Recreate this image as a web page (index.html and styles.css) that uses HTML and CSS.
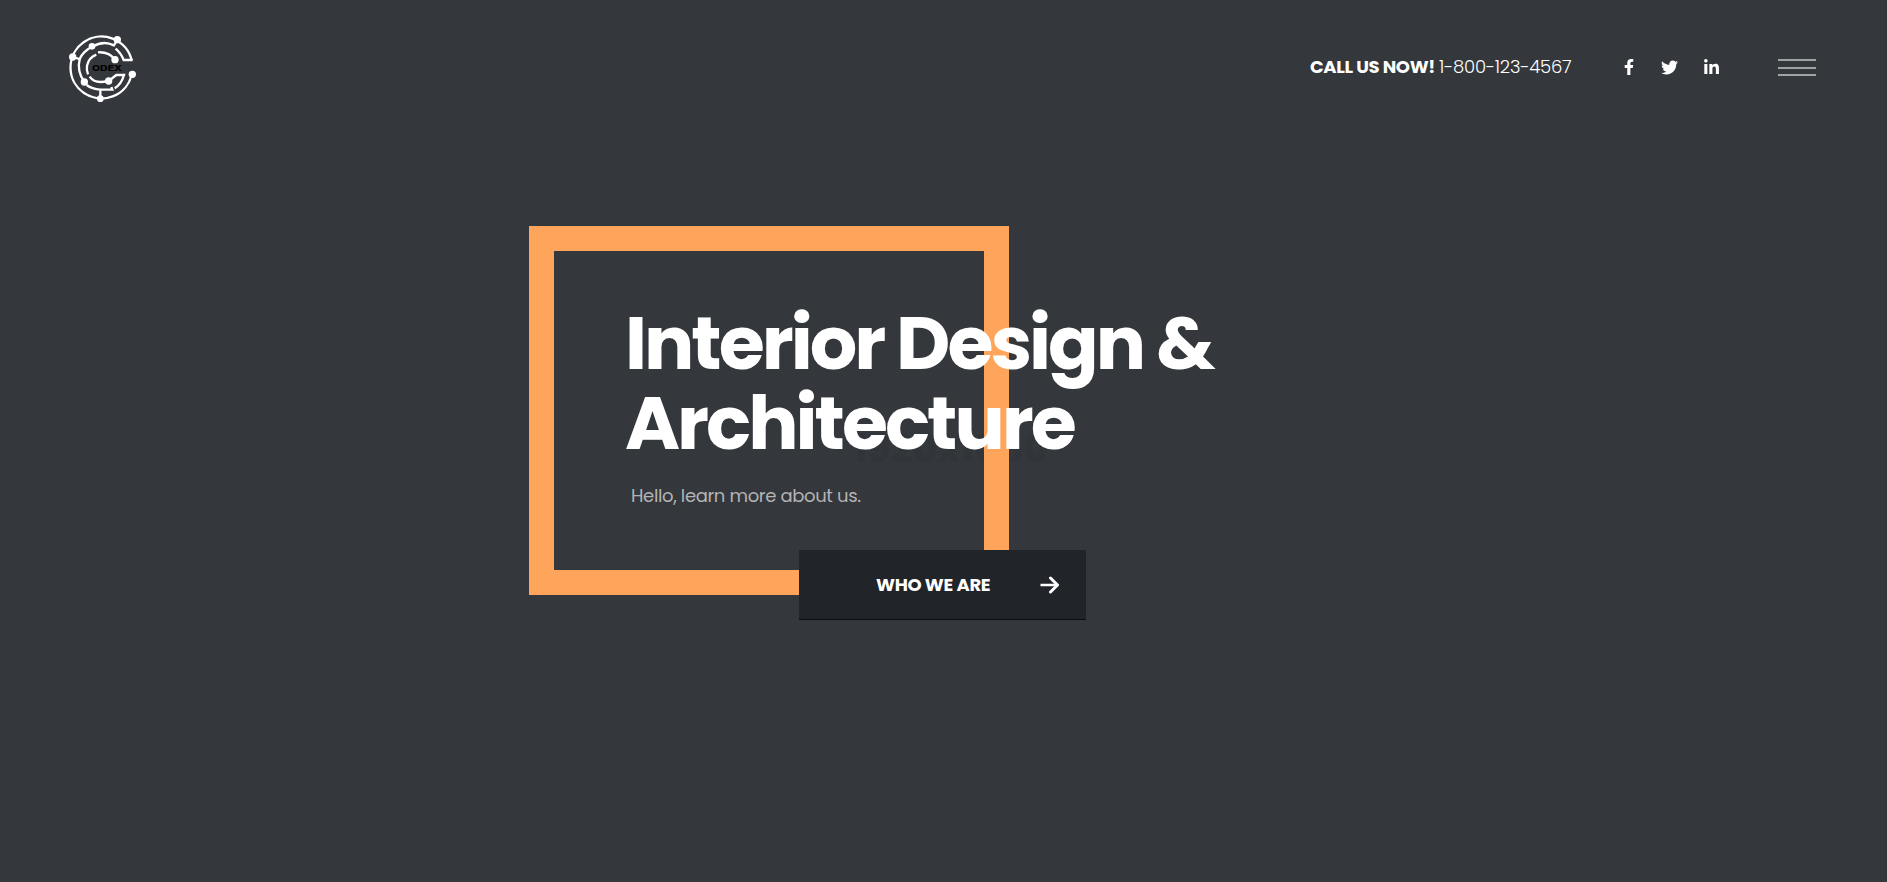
FILE: index.html
```html
<!DOCTYPE html>
<html lang="en">
<head>
<meta charset="utf-8">
<title>Interior Design &amp; Architecture</title>
<link rel="stylesheet" href="styles.css">
</head>
<body>
<header class="header">
  <a class="logo">
    <svg viewBox="0 0 255 255" width="85" height="85" fill="none" stroke="#fff" stroke-width="7">
      <path d="M215 106A93 93 0 1 0 215 149"/>
      <path d="M218 105H191Q184 86 167 71M172 44L162 61Q130 45 97 65M38 96L59 102Q68 80 96 65"/>
      <path d="M59 102Q50 138 73 171M121 221V194Q96 192 80 180M121 194H157L154 186M164 190Q184 178 192 150H169L146 168"/>
      <path d="M165 104Q148 80 114 82M109 89Q86 98 81 122Q79 136 84 148M89 155Q105 178 143 168"/>
      <g fill="#fff" stroke="none"><circle cx="172" cy="44" r="11"/><circle cx="38" cy="96" r="11"/><circle cx="96" cy="64" r="10"/><circle cx="165" cy="104" r="11"/><circle cx="217" cy="148" r="11"/><circle cx="73" cy="171" r="11"/><circle cx="121" cy="221" r="10"/><circle cx="146" cy="168" r="11"/></g>
      <text class="logo-text" x="96" y="138" textLength="90" lengthAdjust="spacingAndGlyphs">ODEX</text>
    </svg>
  </a>
  <div class="contact"><strong class="call">CALL US NOW!</strong><span class="phone">1-800-123-4567</span></div>
  <nav class="social">
    <svg class="facebook" viewBox="0 0 320 512" fill="#fff"><path d="M279.14 288l14.22-92.66h-88.91v-60.13c0-25.35 12.42-50.06 52.24-50.06h40.42V6.26S260.43 0 225.36 0c-73.22 0-121.08 44.38-121.08 124.72v70.62H22.89V288h81.39v224h100.17V288z"/></svg>
    <svg class="twitter" viewBox="0 0 512 512" fill="#fff"><path d="M459.37 151.716c.325 4.548.325 9.097.325 13.645 0 138.72-105.583 298.558-298.558 298.558-59.452 0-114.68-17.219-161.137-47.106 8.447.974 16.568 1.299 25.34 1.299 49.055 0 94.213-16.568 130.274-44.832-46.132-.975-84.792-31.188-98.112-72.772 6.498.974 12.995 1.624 19.818 1.624 9.421 0 18.843-1.3 27.614-3.573-48.081-9.747-84.143-51.98-84.143-102.985v-1.299c13.969 7.797 30.214 12.67 47.431 13.319-28.264-18.843-46.781-51.005-46.781-87.391 0-19.492 5.197-37.36 14.294-52.954 51.655 63.675 129.3 105.258 216.365 109.807-1.624-7.797-2.599-15.918-2.599-24.04 0-57.828 46.782-104.934 104.934-104.934 30.213 0 57.502 12.67 76.67 33.137 23.715-4.548 46.456-13.32 66.599-25.34-7.798 24.366-24.366 44.833-46.132 57.827 21.117-2.273 41.584-8.122 60.426-16.243-14.292 20.791-32.161 39.308-52.628 54.253z"/></svg>
    <svg class="linkedin" viewBox="0 0 448 512" fill="#fff"><path d="M100.28 448H7.4V148.9h92.88zM53.79 108.1C24.09 108.1 0 83.5 0 53.8a53.79 53.79 0 0 1 107.58 0c0 29.7-24.1 54.3-53.79 54.3zM447.9 448h-92.68V302.4c0-34.7-.7-79.2-48.29-79.2-48.29 0-55.69 37.7-55.69 76.7V448h-92.78V148.9h89.08v40.8h1.3c12.4-23.5 42.69-48.3 87.88-48.3 94 0 111.28 61.9 111.28 142.3V448z"/></svg>
  </nav>
  <button class="menu" aria-label="Menu"><i></i><i></i><i></i></button>
</header>
<main class="hero">
  <div class="size-label">1920x1080</div>
  <section class="frame">
    <h1 class="title">Interior Design &amp;<br>Architecture</h1>
    <p class="intro">Hello, learn more about us.</p>
    <a class="button"><span class="button-text">WHO WE ARE</span>
      <svg class="arrow" width="20" height="18" viewBox="0 0 20 18" fill="none" stroke="#fff" stroke-width="3"><path d="M.5 9H18" stroke-width="2.5"/><path d="M10.5 2L17.5 9L10.5 16" stroke-linecap="round" stroke-linejoin="round"/></svg>
    </a>
  </section>
</main>
</body>
</html>
```
FILE: styles.css
```css
* { box-sizing: border-box; }
body { margin: 0; height: 882px; overflow: hidden; background: #34373c; color: #fff; font-family: Poppins, Inter, sans-serif; }
.header { height: 135px; display: flex; align-items: center; padding: 0 71px 0 60px; }
.logo { width: 85px; height: 85px; margin-right: auto; }
.logo svg { display: block; }
.logo-text { font: 800 23px Inter, sans-serif; fill: #000; stroke: none; }
.contact { display: flex; width: 262px; padding-bottom: 2px; font-size: 18px; line-height: 27px; white-space: nowrap; }
.call { width: 129px; font-weight: 700; letter-spacing: -0.36px; }
.phone { font-weight: 300; letter-spacing: -0.25px; }
.social { display: flex; align-items: center; margin-left: 52px; padding-bottom: 1px; width: 95px; }
.facebook { width: 10px; height: 16px; }
.twitter { width: 17px; height: 17px; margin-left: 27px; }
.linkedin { width: 15px; height: 17px; margin-left: 26px; }
.menu { display: flex; flex-direction: column; gap: 6px; width: 38px; margin-left: 59px; padding: 0; border: 0; background: none; }
.menu i { display: block; height: 2px; background: #a0a2a4; }
.menu i:last-child { margin-top: -1px; }
.hero { position: relative; padding: 91px 0 0 529px; }
.size-label { position: absolute; left: 853px; top: 292px; font-size: 38px; line-height: 44px; font-weight: 700; color: #313439; letter-spacing: 0; }
.frame { position: relative; width: 480px; height: 369px; border: 25px solid #ffa45b; padding: 52px 0 0 71px; }
.title { margin: 0; font-size: 74.7px; line-height: 80px; font-weight: 700; letter-spacing: -3px; white-space: nowrap; }
.intro { margin: 18px 0 0 6px; font-size: 18px; line-height: 30px; color: #b3b4b5; letter-spacing: -0.36px; white-space: nowrap; }
.button { position: absolute; left: 245px; top: 299px; width: 287px; height: 70px; padding: 0 26px 0 77px; display: flex; align-items: center; justify-content: space-between; background: #212429; border-bottom: 1px solid #0b0d10; }
.button-text { font-size: 18px; font-weight: 700; letter-spacing: -0.3px; white-space: nowrap; }
```
